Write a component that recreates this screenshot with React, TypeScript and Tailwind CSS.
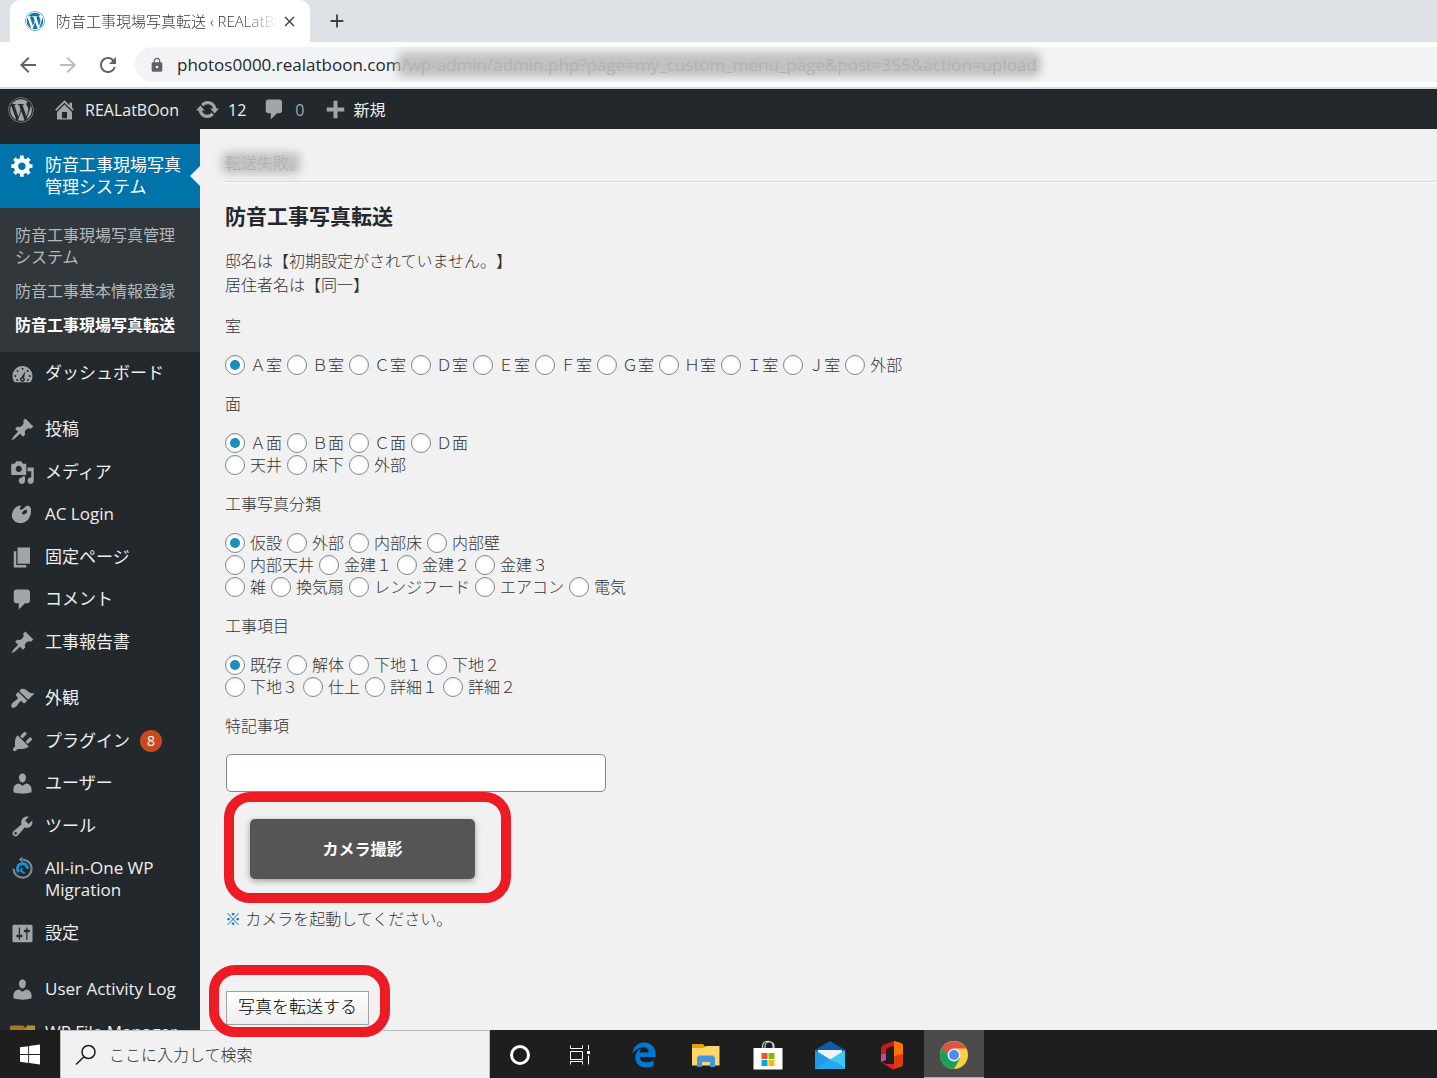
import React, { useState } from 'react';
import { FaWordpress, FaEdgeLegacy, FaWindows } from 'react-icons/fa';
import { MdArrowBack, MdArrowForward, MdRefresh, MdLock, MdClose, MdAdd } from 'react-icons/md';

interface MenuItem {
  id: string;
  label: string;
  icon: React.ReactNode;
  badge?: number;
}

interface RadioGroup {
  name: string;
  title: string;
  rows: string[][];
}

const iconPaths = {
  generic:
    'M18 12h-2.18c-.17.7-.44 1.35-.81 1.93l1.54 1.54-2.1 2.1-1.54-1.54c-.58.36-1.23.63-1.91.79V19H8v-2.18c-.68-.16-1.33-.43-1.91-.79l-1.54 1.54-2.12-2.12 1.54-1.54c-.36-.58-.63-1.23-.79-1.91H1V9.03h2.17c.16-.7.44-1.35.8-1.94L2.43 5.55l2.1-2.1 1.54 1.54c.58-.37 1.24-.64 1.93-.81V2h3v2.18c.68.16 1.33.43 1.91.79l1.54-1.54 2.12 2.12-1.54 1.54c.36.59.64 1.24.8 1.94H18V12zm-8.5 1.5c1.66 0 3-1.34 3-3s-1.34-3-3-3-3 1.34-3 3 1.34 3 3 3z',
  dashboard:
    'M3.76 17h12.48c1.1-1.37 1.76-3.11 1.76-5 0-4.42-3.58-8-8-8s-8 3.58-8 8c0 1.89.66 3.63 1.76 5zM9.3 6.2a.8.8 0 1 1 1.6 0a.8.8 0 1 1-1.6 0zM5.2 8a.8.8 0 1 1 1.6 0a.8.8 0 1 1-1.6 0zm8.2 0a.8.8 0 1 1 1.6 0a.8.8 0 1 1-1.6 0zM3.4 12a.8.8 0 1 1 1.6 0a.8.8 0 1 1-1.6 0zm11.600 0a.8.8 0 1 1 1.6 0a.8.8 0 1 1-1.6 0zM4.900 15.200a.8.8 0 1 1 1.6 0a.8.8 0 1 1-1.6 0zm8.600 0a.8.8 0 1 1 1.6 0a.8.8 0 1 1-1.6 0zM12.300 8l-1 5.300a1.900 1.900 0 1 1-2.200-.4zM9.900 13.700a.8.8 0 1 0 .01 0z',
  post: 'M10.44 3.02l1.82-1.82 6.36 6.35-1.83 1.82c-1.05-.68-2.48-.57-3.41.36l-.75.75c-.92.93-1.04 2.35-.35 3.41l-1.83 1.82-2.41-2.41-2.8 2.79c-.42.42-3.38 2.71-3.8 2.29s1.86-3.39 2.28-3.81l2.79-2.79L4.1 9.36l1.83-1.82c1.05.69 2.48.57 3.4-.36l.75-.75c.93-.92 1.05-2.35.36-3.41z',
  media:
    'M13 11V4c0-.55-.45-1-1-1h-1.67L9 1H5L3.67 3H2c-.55 0-1 .45-1 1v7c0 .55.45 1 1 1h10c.55 0 1-.45 1-1zM7 4.5c1.38 0 2.5 1.12 2.5 2.5S8.38 9.5 7 9.5 4.5 8.38 4.5 7 5.62 4.5 7 4.5zM14 6h5v10.5c0 1.38-1.12 2.5-2.5 2.5S14 17.88 14 16.5s1.12-2.5 2.5-2.5c.17 0 .34.02.5.05V9h-3V6zm-4 8.05V13h2v3.5c0 1.38-1.12 2.5-2.5 2.5S7 17.88 7 16.5 8.12 14 9.5 14c.17 0 .34.02.5.05z',
  art: 'M8.55 3.06c1.01.34-1.95 2.01-.1 3.13 1.04.63 3.31-2.22 4.45-2.86.97-.54 2.67-.65 3.53 1.23 1.09 2.38.14 8.57-3.79 11.06-3.97 2.5-8.97 1.23-10.7-2.66-2.01-4.53 3.12-11.09 6.61-9.9zm1.21 6.45c.73 1.64 4.7-.5 3.79-2.8-.59-1.49-4.48 1.25-3.79 2.8z',
  page: 'M6 15V2h10v13H6zm-1 1h8v2H3V5h2v11z',
  comments:
    'M5 2h9c1.1 0 2 .9 2 2v7c0 1.1-.9 2-2 2h-2l-5 5v-5H5c-1.1 0-2-.9-2-2V4c0-1.1.9-2 2-2z',
  appearance:
    'M14.48 11.06L7.41 3.99l1.5-1.5c.5-.56 2.3-.47 3.51.32 1.21.8 1.43 1.28 2.91 2.1 1.18.64 2.45 1.26 4.45.85zm-.71.71L6.7 4.7 4.93 6.47c-.39.39-.39 1.02 0 1.41l1.06 1.06c.39.39.39 1.03 0 1.42-.6.6-1.43 1.11-2.21 1.69-.35.26-.7.53-1.01.84C1.43 14.23.4 16.08 1.4 17.07c.99 1 2.84-.03 4.18-1.36.31-.31.58-.66.85-1.02.57-.78 1.08-1.61 1.69-2.21.39-.39 1.02-.39 1.41 0l1.06 1.06c.39.39 1.02.39 1.41 0z',
  plugins:
    'M13.11 4.36L9.87 7.6 8 5.73l3.24-3.24c.35-.34 1.05-.2 1.56.32.52.51.66 1.21.31 1.55zm-8 1.77l.91-1.12 9.01 9.01-1.19.84c-.71.71-2.63 1.16-3.82 1.16H6.14L4.9 17.26c-.59.59-1.54.59-2.12 0-.59-.58-.59-1.53 0-2.12l1.24-1.24v-3.88c0-1.13.4-3.19 1.09-3.89zm7.26 3.97l3.24-3.24c.34-.35 1.04-.21 1.55.31.52.51.66 1.21.31 1.55l-3.24 3.25z',
  users:
    'M10 9.25c-2.27 0-2.73-3.44-2.73-3.44C7 4.02 7.82 2 9.97 2c2.16 0 2.98 2.02 2.71 3.81 0 0-.41 3.44-2.68 3.44zm0 2.57L12.72 10c2.39 0 4.52 2.33 4.52 4.53v2.49s-3.65 1.13-7.24 1.13c-3.65 0-7.24-1.13-7.24-1.13v-2.49c0-2.25 1.94-4.48 4.47-4.48z',
  tools:
    'M16.68 9.77c-1.34 1.34-3.3 1.67-4.95.99l-5.41 6.52c-.99.99-2.59.99-3.58 0s-.99-2.59 0-3.57l6.52-5.42c-.68-1.65-.35-3.61.99-4.95 1.28-1.28 3.12-1.62 4.72-1.06l-2.89 2.89 2.82 2.82 2.86-2.87c.53 1.58.18 3.39-1.08 4.65zM3.81 16.21c.4.39 1.04.39 1.43 0 .4-.4.4-1.04 0-1.43-.39-.4-1.03-.4-1.43 0-.39.39-.39 1.03 0 1.43z',
  settings:
    'M18 16V4c0-.55-.45-1-1-1H3c-.55 0-1 .45-1 1v12c0 .55.45 1 1 1h14c.55 0 1-.45 1-1zM8 11h1c.55 0 1 .45 1 1s-.45 1-1 1H8v1.5c0 .28-.22.5-.5.5s-.5-.22-.5-.5V13H6c-.55 0-1-.45-1-1s.45-1 1-1h1V5.5c0-.28.22-.5.5-.5s.5.22.5.5V11zm5-2h-1c-.55 0-1-.45-1-1s.45-1 1-1h1V5.5c0-.28.22-.5.5-.5s.5.22.5.5V7h1c.55 0 1 .45 1 1s-.45 1-1 1h-1v5.5c0 .28-.22.5-.5.5s-.5-.22-.5-.5V9z',
  home: 'M16 8.5l1.53 1.53-1.06 1.06L10 4.6l-6.47 6.49-1.06-1.06L10 2.5l4 4v-2h2v4zm-6-2.46l6 5.99V18H4v-5.97zM12 17v-5H8v5h4z',
  update:
    'M10.2 3.28c3.53 0 6.43 2.61 6.92 6h2.08l-3.5 4-3.5-4h2.32c-.45-1.97-2.21-3.45-4.32-3.45-1.45 0-2.73.71-3.54 1.78L4.95 5.66C6.23 4.2 8.11 3.28 10.2 3.28zm-.4 13.44c-3.52 0-6.43-2.61-6.92-6H.8l3.5-4c1.17 1.33 2.33 2.67 3.5 4H5.48c.45 1.97 2.21 3.45 4.32 3.45 1.45 0 2.73-.71 3.54-1.78l1.71 1.95c-1.28 1.46-3.15 2.38-5.25 2.38z',
  plus: 'M17 8.400v3.200h-5.400v5.400H8.400v-5.400H3V8.400h5.400V3h3.200v5.400z',
};

const Dashicon = ({ name }: { name: keyof typeof iconPaths }) => (
  <svg viewBox="0 0 20 20" className="w-[25px] h-[25px] shrink-0" fill="currentColor" fillRule="evenodd">
    <path d={iconPaths[name]} />
  </svg>
);

const MigrationIcon = () => (
  <svg viewBox="0 0 25 25" className="w-[25px] h-[25px] shrink-0" fill="none">
    <path d="M13 3.700a9 9 0 1 1-9.400 9" stroke="#82878c" strokeWidth="2.200" />
    <path d="M12.500 .6v6l-3.500-3z" fill="#82878c" />
    <path d="M8.700 16a5 5 0 1 1 8.700-3.200" stroke="#0e96dc" strokeWidth="3" />
    <path d="M11.800 11.800l-.8 3.200 3.600 2.200" stroke="#0e96dc" strokeWidth="1.800" />
  </svg>
);

const FolderIcon = () => (
  <svg viewBox="0 0 25 25" className="w-[25px] h-[25px] shrink-0">
    <path d="M0 7l1-1.500h12l3 3v16H0z" fill="#a87422" />
    <path d="M25 5.500h-8l-3 5H0v14h25z" fill="#ad922c" />
  </svg>
);

const menuGroups: MenuItem[][] = [
  [{ id: 'dashboard', label: 'ダッシュボード', icon: <Dashicon name="dashboard" /> }],
  [
    { id: 'posts', label: '投稿', icon: <Dashicon name="post" /> },
    { id: 'media', label: 'メディア', icon: <Dashicon name="media" /> },
    { id: 'ac-login', label: 'AC Login', icon: <Dashicon name="art" /> },
    { id: 'pages', label: '固定ページ', icon: <Dashicon name="page" /> },
    { id: 'comments', label: 'コメント', icon: <Dashicon name="comments" /> },
    { id: 'reports', label: '工事報告書', icon: <Dashicon name="post" /> },
  ],
  [
    { id: 'appearance', label: '外観', icon: <Dashicon name="appearance" /> },
    { id: 'plugins', label: 'プラグイン', icon: <Dashicon name="plugins" />, badge: 8 },
    { id: 'users', label: 'ユーザー', icon: <Dashicon name="users" /> },
    { id: 'tools', label: 'ツール', icon: <Dashicon name="tools" /> },
    { id: 'migration', label: 'All-in-One WP Migration', icon: <MigrationIcon /> },
    { id: 'settings', label: '設定', icon: <Dashicon name="settings" /> },
  ],
  [
    { id: 'activity', label: 'User Activity Log', icon: <Dashicon name="users" /> },
    { id: 'files', label: 'WP File Manager', icon: <FolderIcon /> },
  ],
];

const subMenu = ['防音工事現場写真管理システム', '防音工事基本情報登録', '防音工事現場写真転送'];

const radioGroups: RadioGroup[] = [
  {
    name: 'room',
    title: '室',
    rows: [['Ａ室', 'Ｂ室', 'Ｃ室', 'Ｄ室', 'Ｅ室', 'Ｆ室', 'Ｇ室', 'Ｈ室', 'Ｉ室', 'Ｊ室', '外部']],
  },
  {
    name: 'side',
    title: '面',
    rows: [
      ['Ａ面', 'Ｂ面', 'Ｃ面', 'Ｄ面'],
      ['天井', '床下', '外部'],
    ],
  },
  {
    name: 'category',
    title: '工事写真分類',
    rows: [
      ['仮設', '外部', '内部床', '内部壁'],
      ['内部天井', '金建１', '金建２', '金建３'],
      ['雑', '換気扇', 'レンジフード', 'エアコン', '電気'],
    ],
  },
  {
    name: 'item',
    title: '工事項目',
    rows: [
      ['既存', '解体', '下地１', '下地２'],
      ['下地３', '仕上', '詳細１', '詳細２'],
    ],
  },
];

const BrowserChrome = () => (
  <header>
    <div className="flex h-[42px] bg-[#dee1e6] pl-[10px]">
      <div className="flex items-center w-[300px] rounded-t-[10px] bg-white pl-[15px] pr-3">
        <FaWordpress className="w-5 h-5 shrink-0 text-[#1179ac]" />
        <span className="ml-[11px] flex-1 overflow-hidden whitespace-nowrap text-[15px] font-light text-[#35393d] [mask-image:linear-gradient(to_right,black_85%,transparent)]">
          防音工事現場写真転送 ‹ REALatBOon
        </span>
        <button aria-label="閉じる" className="ml-1">
          <MdClose className="w-[17px] h-[17px] text-[#3c4043]" />
        </button>
      </div>
      <button aria-label="新しいタブ" className="ml-4">
        <MdAdd className="w-[22px] h-[22px] text-[#3c4043]" />
      </button>
    </div>
    <div className="flex items-center h-[47px] border-b-2 border-[#d8d9db] bg-white pl-4">
      <button aria-label="戻る">
        <MdArrowBack className="w-6 h-6 text-[#5f6368]" />
      </button>
      <button aria-label="進む" className="ml-4">
        <MdArrowForward className="w-6 h-6 text-[#babcbe]" />
      </button>
      <button aria-label="再読み込み" className="ml-4">
        <MdRefresh className="w-6 h-6 text-[#5f6368]" />
      </button>
      <div className="flex flex-1 items-center h-[35px] ml-[15px] rounded-l-full bg-[#f1f3f4] pl-[14px] text-[17px] text-[#25282c]">
        <MdLock className="w-4 h-4 text-[#5f6368]" />
        <span className="ml-3">photos0000.realatboon.com</span>
        <span className="relative">
          <span className="absolute -inset-x-1 inset-y-0 rounded-lg bg-[#c1c1c1] blur-[4px]" />
          <span className="relative text-[#b2b2b2]">
            /wp-admin/admin.php?page=my_custom_menu_page&amp;post=355&amp;action=upload
          </span>
        </span>
      </div>
    </div>
  </header>
);

const AdminBar = () => (
  <nav className="flex items-center h-10 shrink-0 bg-[#23282d] pt-px pl-2 text-base text-[#eee]">
    <a href="#about" aria-label="WordPress">
      <FaWordpress className="w-[26px] h-[26px] text-[#a0a5aa]" />
    </a>
    <a href="#site" className="flex items-center ml-[18px]">
      <span className="mr-2 text-[#a0a5aa]"><Dashicon name="home" /></span>
      REALatBOon
    </a>
    <a href="#updates" className="flex items-center ml-4">
      <span className="mr-2 text-[#a0a5aa]"><Dashicon name="update" /></span>
      12
    </a>
    <a href="#comments" className="flex items-center ml-4 text-[#a0a5aa]">
      <span className="mr-2"><Dashicon name="comments" /></span>
      0
    </a>
    <a href="#new" className="flex items-center ml-[18px]">
      <span className="mr-[6px] text-[#a0a5aa]"><Dashicon name="plus" /></span>
      新規
    </a>
  </nav>
);

const Sidebar = () => (
  <aside className="w-[200px] shrink-0 overflow-hidden bg-[#23282d] pt-[15px] text-[17px] leading-[22px] text-[#eee]">
    <a href="#system" className="relative flex bg-[#0073aa] py-[10px] pl-[10px] text-white">
      <span className="flex items-center h-[22px]"><Dashicon name="generic" /></span>
      <span className="w-[146px] ml-[10px]">防音工事現場写真<br />管理システム</span>
      <span className="absolute right-0 top-1/2 -translate-y-1/2 border-y-[10px] border-r-[10px] border-y-transparent border-r-[#f1f1f1]" />
    </a>
    <ul className="bg-[#32373c] py-[10px] text-base leading-[22px] text-[#b4b9be]">
      {subMenu.map((label, i) => (
        <li key={label}>
          <a
            href="#sub"
            className={`block py-[6px] pl-[15px] pr-5 ${i === 2 ? 'font-bold text-white' : ''}`}
          >
            {label}
          </a>
        </li>
      ))}
    </ul>
    {menuGroups.map((group) => (
      <ul key={group[0].id} className="mb-[14px]">
        {group.map((item) => (
          <li key={item.id} className="pt-[10px] even:pt-[11px] pb-[10px]">
            <a href={`#${item.id}`} className="flex pl-[10px] text-[#a0a5aa]">
              <span className="flex items-center h-[22px]">{item.icon}</span>
              <span className="ml-[10px] max-w-[135px] text-[#eee]">{item.label}</span>
              {item.badge && (
                <span className="w-[22px] h-[22px] ml-[10px] rounded-full bg-[#ca4a1f] text-center text-sm leading-[22px] text-white">
                  {item.badge}
                </span>
              )}
            </a>
          </li>
        ))}
      </ul>
    ))}
  </aside>
);

const UploadForm = () => {
  const [selected, setSelected] = useState<Record<string, string>>({
    room: 'Ａ室',
    side: 'Ａ面',
    category: '仮設',
    item: '既存',
  });
  const [note, setNote] = useState('');

  return (
    <main className="min-w-0 flex-1 bg-[#f1f1f1] pt-[22px] pl-[25px] text-base font-light leading-6 text-[#333]">
      <div className="border-b border-[#dadada] pb-[6px] shadow-[0_1px_0_#fafafa]">
        <span className="relative">
          <span className="relative text-[#909090]">転送失敗。</span>
          <span className="absolute -left-1 right-1 inset-y-0 rounded-lg bg-[#b8b8b8]/80 blur-[4px]" />
        </span>
      </div>
      <h1 className="mt-5 text-[21px] font-bold leading-7 text-[#23282d]">防音工事写真転送</h1>
      <p className="mt-[19px] mb-[17px] [text-spacing-trim:space-all]">
        邸名は【初期設定がされていません。】
        <br />
        居住者名は【同一】
      </p>
      <form onSubmit={(e) => e.preventDefault()}>
        {radioGroups.map((group) => (
          <fieldset key={group.name} className="mb-4">
            <legend className="mb-4">{group.title}</legend>
            {group.rows.map((row) => (
              <div key={row[0]} className="flex flex-wrap gap-x-[5px] leading-[22px]">
                {row.map((label) => (
                  <label key={label} className="flex items-center gap-[5px]">
                    <input
                      type="radio"
                      name={group.name}
                      checked={selected[group.name] === label}
                      onChange={() => setSelected({ ...selected, [group.name]: label })}
                      className="grid place-items-center w-5 h-5 appearance-none rounded-full border border-[#7e8993] bg-white shadow-[inset_0_1px_2px_rgba(0,0,0,0.1)] checked:before:w-[10px] checked:before:h-[10px] checked:before:rounded-full checked:before:bg-[#1e8cbe] checked:before:content-['']"
                    />
                    {label}
                  </label>
                ))}
              </div>
            ))}
          </fieldset>
        ))}
        <label htmlFor="note" className="block mb-4">特記事項</label>
        <input
          id="note"
          type="text"
          value={note}
          onChange={(e) => setNote(e.target.value)}
          className="block w-[380px] h-[38px] ml-px rounded-[5px] border border-[#7e8993] bg-white px-2"
        />
        <div className="relative w-fit mt-[27px] ml-[25px]">
          <button
            type="button"
            className="block w-[225px] h-[60px] rounded-[5px] bg-[#555] font-bold text-white shadow-[0_2px_6px_rgba(0,0,0,0.35)]"
          >
            カメラ撮影
          </button>
          <span className="pointer-events-none absolute -top-[27px] -right-9 -bottom-6 -left-[26px] rounded-[26px] border-[10px] border-[#ed1c24]" />
        </div>
        <p className="mt-7">
          <span className="text-[#0073aa]">※</span> カメラを起動してください。
        </p>
        <div className="relative w-fit mt-[60px] ml-px">
          <button
            type="submit"
            className="block h-[34px] border border-[#a0a0a0] bg-linear-to-b from-white to-[#ededed] px-[11px] pb-[2px] text-[17px] leading-6 text-black"
          >
            写真を転送する
          </button>
          <span className="pointer-events-none absolute z-10 -top-[26px] -right-[21px] -bottom-3 -left-[17px] rounded-[26px] border-[10px] border-[#ed1c24]" />
        </div>
      </form>
    </main>
  );
};

const TaskViewIcon = () => (
  <svg viewBox="0 0 22 20" className="w-[22px] h-5" fill="none" stroke="#fff">
    <path d="M1.500 .5v3h12v-3M1.500 19.500v-3h12v3M1.500 6.500h12v8h-12zM19.500 0v4.500M19.500 10.500v9" />
    <path d="M18 6h3v3h-3z" fill="#fff" stroke="none" />
  </svg>
);

const ExplorerIcon = () => (
  <svg viewBox="0 0 28 24" className="w-7 h-6">
    <path d="M0 1h11l2.500 3H27v18H0z" fill="#e2a100" />
    <path d="M0 5h12l2-2h13.500v19.500H0z" fill="#ffd768" />
    <path d="M5 24V14.500l2-2h14l2 2V24h-5v-5h-8v5z" fill="#3f97dd" />
  </svg>
);

const StoreIcon = () => (
  <svg viewBox="0 0 30 30" className="w-[30px] h-[30px]">
    <path d="M9.500 9V6.500c0-7 10.500-7 10.500 0V9M12 9V6.500c0-6 9-6 9 0V9" fill="none" stroke="#ccc" strokeWidth="1.200" />
    <path d="M.5 8h29v21.500H.5z" fill="#fff" />
    <path d="M8.500 13h6v6h-6z" fill="#f25022" />
    <path d="M15.500 13h6v6h-6z" fill="#7fba00" />
    <path d="M8.500 20h6v6h-6z" fill="#00a4ef" />
    <path d="M15.500 20h6v6h-6z" fill="#ffb900" />
  </svg>
);

const MailIcon = () => (
  <svg viewBox="0 0 30 28" className="w-[30px] h-7">
    <path d="M0 9L15 0l15 9v5H0z" fill="#0a5cad" />
    <path d="M3 9h24v12H3z" fill="#f3f3f3" />
    <path d="M0 9l17.500 11L30 28H0z" fill="#1e9be6" />
    <path d="M30 9v19L16 18z" fill="#3cc8f5" />
    <path d="M0 28h30L16 18z" fill="#2aa8ee" />
  </svg>
);

const OfficeIcon = () => (
  <svg viewBox="0 0 24 28" className="w-6 h-7">
    <path d="M14 0L4 3.500Q1 5 1 8v13l5-2V9q0-2 2-2.500l6-1.500z" fill="#c81e14" />
    <path d="M1 13v8l5-2v-6z" fill="#b5509a" />
    <path d="M14 0l7 2q2 .8 2 3v18q0 2.200-2 3l-7 2z" fill="#e03c08" />
    <path d="M14 0l7 2q2 .8 2 3v8l-9 2z" fill="#fb7309" />
    <path d="M1 21l10 6.500q1.500.7 3 .5v-5H6z" fill="#e51937" />
  </svg>
);

const ChromeIcon = () => (
  <svg viewBox="0 0 28 28" className="w-7 h-7">
    <circle cx="14" cy="14" r="14" fill="#ffcd40" />
    <path d="M14 14L1.880 7A14 14 0 0 0 14 28l6-10.500z" fill="#14a05e" />
    <path d="M14 14H7.900L1.880 7A14 14 0 0 1 26.120 7.500H14z" fill="#de5246" />
    <circle cx="14" cy="14" r="6.500" fill="#f1f1f1" />
    <circle cx="14" cy="14" r="5" fill="#4c8bf5" />
  </svg>
);

const apps = [
  { name: 'Edge', icon: <FaEdgeLegacy className="w-[26px] h-[26px] text-[#0078d7]" /> },
  { name: 'エクスプローラー', icon: <ExplorerIcon /> },
  { name: 'Store', icon: <StoreIcon /> },
  { name: 'メール', icon: <MailIcon /> },
  { name: 'Office', icon: <OfficeIcon /> },
  { name: 'Chrome', icon: <ChromeIcon />, active: true },
];

const Taskbar = () => (
  <footer className="flex h-12 shrink-0 bg-[#1e1e1e] pt-px">
    <button aria-label="スタート" className="flex items-center justify-center w-[60px]">
      <FaWindows className="w-5 h-[23px] text-white" />
    </button>
    <div className="flex items-center w-[430px] -mt-px border border-b-0 border-[#bdbdbd] bg-[#f1f1f1] pl-[14px]">
      <svg viewBox="0 0 22 22" className="w-[22px] h-[22px]" fill="none" stroke="#1c1c1c" strokeWidth="1.500">
        <circle cx="13.500" cy="8" r="6.500" />
        <path d="M9 12.800L1 20.500" />
      </svg>
      <input
        type="search"
        aria-label="検索"
        placeholder="ここに入力して検索"
        className="flex-1 min-w-0 ml-3 bg-transparent text-base font-light placeholder:text-[#2c2c2c]"
      />
    </div>
    <button aria-label="Cortana" className="flex items-center justify-center w-[60px]">
      <span className="w-5 h-5 rounded-full border-[3px] border-white" />
    </button>
    <button aria-label="タスクビュー" className="flex items-center justify-center w-[60px]">
      <TaskViewIcon />
    </button>
    <div className="flex gap-[2px] ml-1 -mt-px">
      {apps.map((app) => (
        <button
          key={app.name}
          aria-label={app.name}
          className={`flex items-center justify-center w-[60px] border-b pt-[2px] ${app.active ? 'border-[#76b9ed] bg-[#4b4b4b]' : 'border-transparent'}`}
        >
          {app.icon}
        </button>
      ))}
    </div>
  </footer>
);

const App = () => (
  <div className="flex flex-col h-screen overflow-hidden bg-[#f1f1f1] font-['Open_Sans','Noto_Sans_CJK_JP',sans-serif]">
    <BrowserChrome />
    <AdminBar />
    <div className="flex flex-1 min-h-0">
      <Sidebar />
      <UploadForm />
    </div>
    <Taskbar />
  </div>
);

export default App;
